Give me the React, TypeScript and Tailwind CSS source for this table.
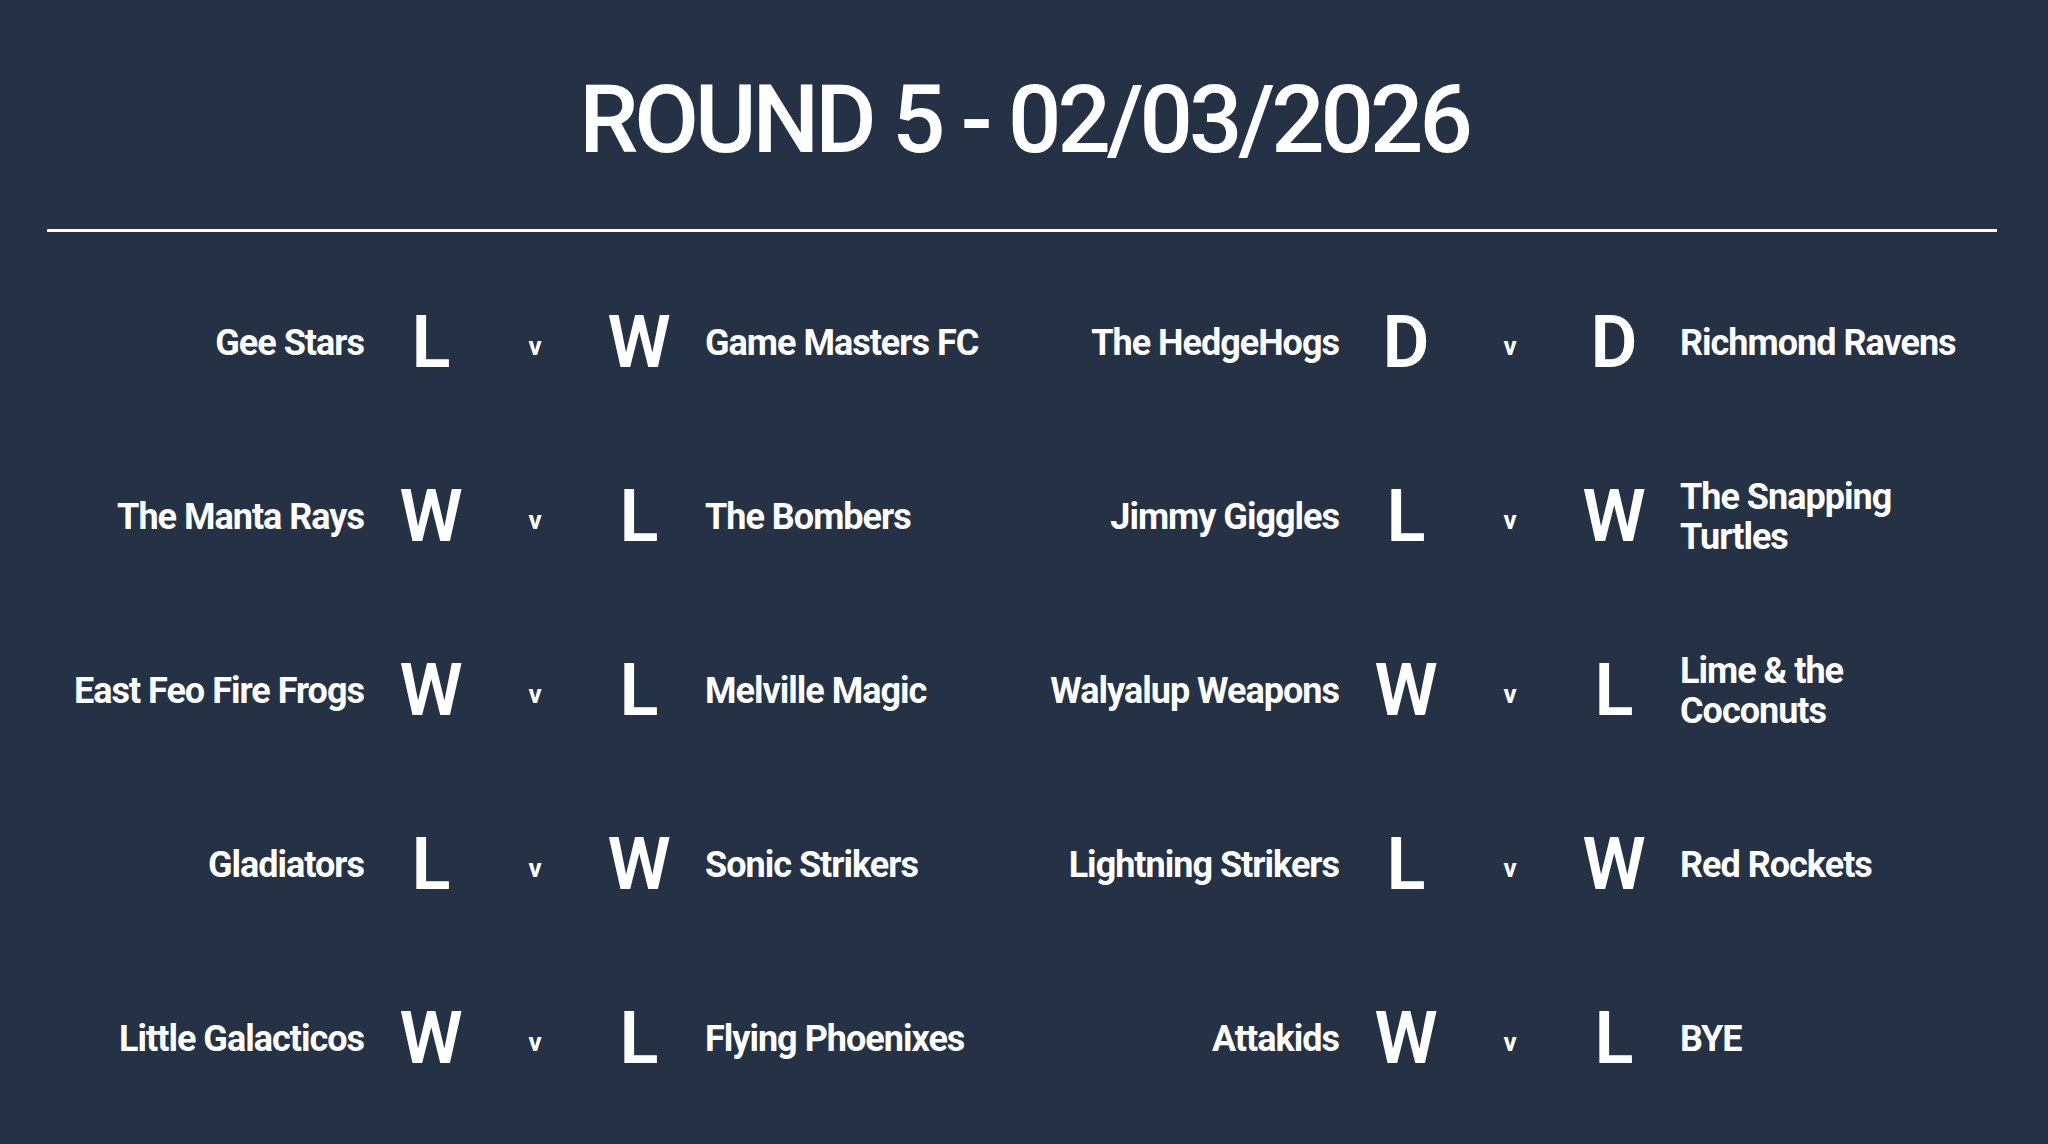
type Match = {
  home: string
  homeResult: string
  away: string
  awayResult: string
}

// laid out row by row: left column, then right column
const matches: Match[] = [
  { home: "Gee Stars", homeResult: "L", away: "Game Masters FC", awayResult: "W" },
  { home: "The HedgeHogs", homeResult: "D", away: "Richmond Ravens", awayResult: "D" },
  { home: "The Manta Rays", homeResult: "W", away: "The Bombers", awayResult: "L" },
  { home: "Jimmy Giggles", homeResult: "L", away: "The Snapping\nTurtles", awayResult: "W" },
  { home: "East Feo Fire Frogs", homeResult: "W", away: "Melville Magic", awayResult: "L" },
  { home: "Walyalup Weapons", homeResult: "W", away: "Lime & the\nCoconuts", awayResult: "L" },
  { home: "Gladiators", homeResult: "L", away: "Sonic Strikers", awayResult: "W" },
  { home: "Lightning Strikers", homeResult: "L", away: "Red Rockets", awayResult: "W" },
  { home: "Little Galacticos", homeResult: "W", away: "Flying Phoenixes", awayResult: "L" },
  { home: "Attakids", homeResult: "W", away: "BYE", awayResult: "L" },
]

function MatchRow({ m }: { m: Match }) {
  return (
    <div className="grid h-[174px] grid-cols-[344px_80px_128px_80px_1fr] items-center">
      <div className="whitespace-pre pr-[27px] text-right text-[36px] font-bold leading-[40px] tracking-[-1px]">
        {m.home}
      </div>
      <div className="text-center text-[72px] font-semibold leading-none">{m.homeResult}</div>
      <div className="pt-[6px] text-center text-[26px] font-bold leading-none">v</div>
      <div className="text-center text-[72px] font-semibold leading-none">{m.awayResult}</div>
      <div className="whitespace-pre pl-[26px] text-left text-[36px] font-bold leading-[40px] tracking-[-1px]">
        {m.away}
      </div>
    </div>
  )
}

export default function App() {
  return (
    <div
      className="h-[1144px] w-full overflow-hidden bg-[#253245] px-[47px] pt-[73px] text-white"
      style={{ fontFamily: "Roboto, 'Liberation Sans', sans-serif" }}
    >
      <h1 className="text-center text-[94px] font-medium leading-none tracking-[-4px]">
        ROUND 5 - 02/03/2026
      </h1>
      <div className="mt-[62px] h-[3px] w-[1950px] bg-white" />
      <div className="mt-[24px] grid w-[1950px] grid-cols-2">
        {matches.map((m) => (
          <MatchRow key={m.home} m={m} />
        ))}
      </div>
    </div>
  )
}
